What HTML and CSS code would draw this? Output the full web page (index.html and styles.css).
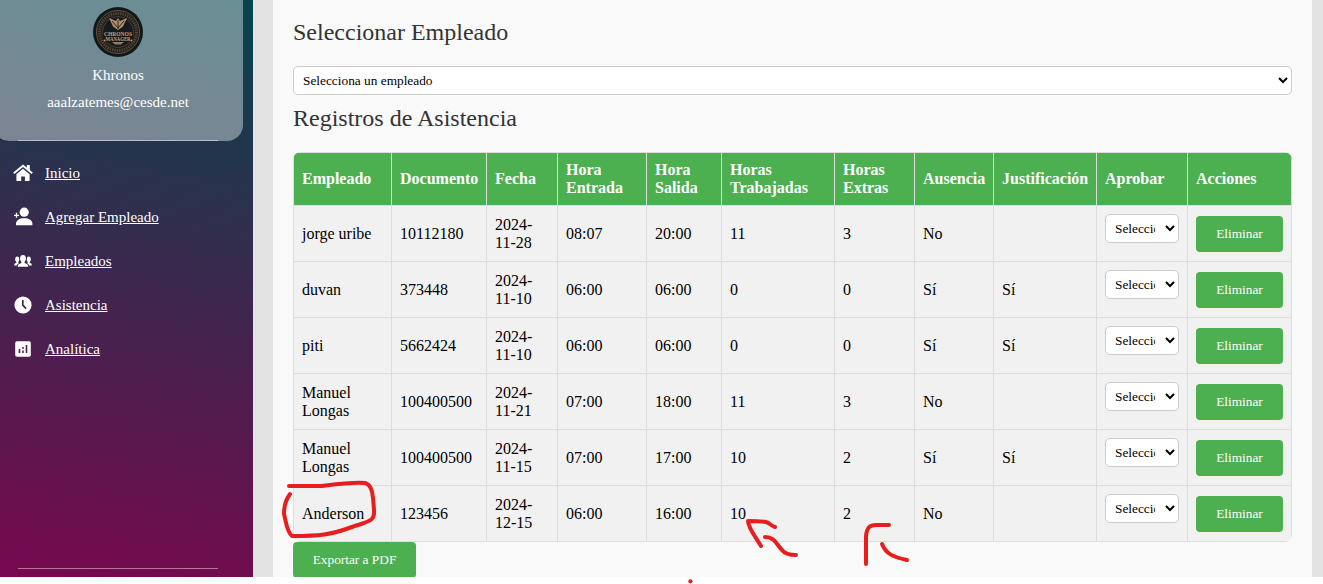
FILE: index.html
```html
<!DOCTYPE html>
<html lang="es">
<head>
<meta charset="utf-8">
<title>Registros de Asistencia</title>
<link rel="stylesheet" href="styles.css">
</head>
<body>
<div class="app">
  <aside class="sidebar">
    <div class="profile">
      <svg class="avatar" viewBox="0 0 50 50">
        <circle cx="25" cy="25" r="25" fill="#10181b"/>
        <circle cx="25" cy="25" r="21.500" fill="#211f1c" stroke="#685040" stroke-width="1"/>
        <circle cx="25" cy="25" r="18.500" fill="none" stroke="#55463a" stroke-width="3" stroke-dasharray="1.3 1.1"/>
        <circle cx="25" cy="25" r="15.500" fill="#151b1e" stroke="#58483a" stroke-width=".8"/>
        <path d="M16 11l7 3 2-3 2 3 7-3-4 8.500-5 3.500-5-3.500z" fill="#b08d6a"/>
        <path d="M19 14l6 7 6-7M25 13v9" fill="none" stroke="#32271f" stroke-width="1"/>
        <rect x="10" y="23.500" width="30" height="11" fill="#1a1a1a"/>
        <text x="25" y="28.600" class="crest" textLength="28" lengthAdjust="spacingAndGlyphs">CHRONOS</text>
        <text x="25" y="33.700" class="crest" textLength="25" lengthAdjust="spacingAndGlyphs">MANAGER</text>
        <path d="M19 35h12l-3 2.500h-6z" fill="#9b7957"/>
        <circle cx="11.500" cy="33.500" r=".9" fill="#d19a58"/><circle cx="38.500" cy="33.500" r=".9" fill="#d19a58"/>
      </svg>
      <p class="name">Khronos</p>
      <p class="mail">aaalzatemes@cesde.net</p>
      <hr class="rule">
    </div>
    <nav class="menu">
      <a href="#"><svg viewBox="0 0 20 20"><path d="M10 5.700l6.600 5.600v5.900a.9.9 0 0 1-.9.900h-3.800v-4.600H8.200v4.600H4.300a.9.9 0 0 1-.9-.900v-5.900z"/><path d="M.8 10.200L10 2.800l9.200 7.400" fill="none" stroke="#fff" stroke-width="2"/><path d="M13.800 1.900h3v6.500l-3-2.400z"/></svg><span>Inicio</span></a>
      <a href="#"><svg viewBox="0 0 20 20"><circle cx="11.200" cy="5.200" r="4.600"/><path d="M3 18.300v-1.500c0-3.600 3.400-5.600 8.200-5.600s8.200 2 8.200 5.600v1.500z"/><path d="M3.500 5.800v5M1 8.300h5" stroke="#fff" stroke-width="1.300"/></svg><span>Agregar Empleado</span></a>
      <a href="#"><svg viewBox="0 0 20 20"><ellipse cx="10" cy="7.400" rx="2.900" ry="3.400"/><path d="M4.800 15.800c0-2.500 1-3 3.600-3.900V9h3.200v2.900c2.600.9 3.600 1.400 3.600 3.900z"/><ellipse cx="4.200" cy="8.300" rx="2" ry="2.800"/><ellipse cx="15.800" cy="8.300" rx="2" ry="2.800"/><path d="M1.200 14.400c0-1.700.7-2.100 2.200-2.600V9h1.800v2.400l1 .5c-1.300.5-2 1.200-2.300 2.500zM18.800 14.400c0-1.700-.7-2.100-2.200-2.600V9h-1.800v2.400l-1 .5c1.300.5 2 1.200 2.300 2.500z"/></svg><span>Empleados</span></a>
      <a href="#"><svg viewBox="0 0 20 20"><circle cx="10" cy="10" r="8.600"/><path d="M9.800 5v5.200l3.300 3.400" fill="none" stroke="#44264f" stroke-width="1.700"/></svg><span>Asistencia</span></a>
      <a href="#"><svg viewBox="0 0 20 20"><rect x="2.200" y="2.200" width="15.600" height="15.600" rx="1.800"/><path d="M6.500 10v4M10 11.500V14M10 8v1.800M13.500 6v8" stroke="#4c204e" stroke-width="1.600"/></svg><span>Analítica</span></a>
    </nav>
    <hr class="rule foot">
  </aside>
  <main class="content">
    <h2>Seleccionar Empleado</h2>
    <select class="picker"><option>Selecciona un empleado</option></select>
    <h2>Registros de Asistencia</h2>
    <div class="frame">
      <table>
        <colgroup><col class="c1"><col class="c2"><col class="c3"><col class="c4"><col class="c5"><col class="c6"><col class="c7"><col class="c8"><col class="c9"><col class="c10"><col class="c11"></colgroup>
        <thead><tr><th>Empleado</th><th>Documento</th><th>Fecha</th><th>Hora Entrada</th><th>Hora Salida</th><th>Horas Trabajadas</th><th>Horas Extras</th><th>Ausencia</th><th>Justificación</th><th>Aprobar</th><th>Acciones</th></tr></thead>
        <tbody>
          <tr><td>jorge uribe</td><td>10112180</td><td>2024-11-28</td><td>08:07</td><td>20:00</td><td>11</td><td>3</td><td>No</td><td></td><td><select><option>Seleccionar</option></select></td><td><button>Eliminar</button></td></tr>
          <tr><td>duvan</td><td>373448</td><td>2024-11-10</td><td>06:00</td><td>06:00</td><td>0</td><td>0</td><td>Sí</td><td>Sí</td><td><select><option>Seleccionar</option></select></td><td><button>Eliminar</button></td></tr>
          <tr><td>piti</td><td>5662424</td><td>2024-11-10</td><td>06:00</td><td>06:00</td><td>0</td><td>0</td><td>Sí</td><td>Sí</td><td><select><option>Seleccionar</option></select></td><td><button>Eliminar</button></td></tr>
          <tr><td>Manuel Longas</td><td>100400500</td><td>2024-11-21</td><td>07:00</td><td>18:00</td><td>11</td><td>3</td><td>No</td><td></td><td><select><option>Seleccionar</option></select></td><td><button>Eliminar</button></td></tr>
          <tr><td>Manuel Longas</td><td>100400500</td><td>2024-11-15</td><td>07:00</td><td>17:00</td><td>10</td><td>2</td><td>Sí</td><td>Sí</td><td><select><option>Seleccionar</option></select></td><td><button>Eliminar</button></td></tr>
          <tr><td>Anderson</td><td>123456</td><td>2024-12-15</td><td>06:00</td><td>16:00</td><td>10</td><td>2</td><td>No</td><td></td><td><select><option>Seleccionar</option></select></td><td><button>Eliminar</button></td></tr>
        </tbody>
      </table>
    </div>
    <button class="export">Exportar a PDF</button>
  </main>
</div>
<svg class="marks" viewBox="0 0 1323 584">
  <path d="M289 486H322C338 484 352 482 365 483C373 485 373 497 374 510C375 521 370 521 352 527C330 535 320 536 292 536C287 532 286 522 284 514C284 505 287 498 290 494"/>
  <path d="M761 546C757 539 748 528 748 521C753 521 761 521 766 522C770 523 771 526 775 527M765 537C775 537 776 544 782 550C785 554 789 555 796 555"/>
  <path d="M866 564V536C867 527 870 525 876 525H889M882 544C886 554 893 557 907 560"/>
  <circle class="dot" cx="690.400" cy="581.300" r="2.100"/>
</svg>
</body>
</html>
```
FILE: styles.css
```css
* { box-sizing: border-box; }
body { position: relative; height: 584px; margin: 0; background: #fff; font: 16px/18px "Liberation Serif", "Times New Roman", serif; color: #000; }
.app { display: flex; height: 577px; background: #e3e3e3; }
.sidebar { width: 253px; display: flex; flex-direction: column; overflow: hidden; color: #fff; font-size: 15px; background: linear-gradient(190deg, #05454d 0%, #78084f 100%); }
.profile { width: 250px; height: 141px; margin-left: -7px; padding-top: 7px; display: flex; flex-direction: column; align-items: center; background: rgba(255, 255, 255, .4); border-radius: 0 0 16px 16px; }
.avatar { width: 50px; height: 50px; }
.crest { font: bold 5.6px "Liberation Serif", serif; fill: #c6a078; text-anchor: middle; }
.profile p { margin: 9px 0 0; line-height: 18px; }
.rule { width: 200px; height: 1px; margin: auto 0 0; border: 0; background: rgba(255, 255, 255, .45); }
.menu { display: flex; flex-direction: column; gap: 24px; padding: 22px 0 0 13px; }
.menu a { display: flex; align-items: center; gap: 12px; height: 20px; color: #fff; }
.menu svg { width: 20px; height: 20px; fill: #fff; }
.foot { margin: auto 0 8px 18px; }
.content { width: 1039px; margin-left: 20px; padding: 19px 20px 0; background: #f9f9f9; overflow: hidden; }
h2 { margin: 0 0 20px; font-size: 24px; font-weight: normal; line-height: 27px; color: #333; }
select { display: block; width: 100%; height: 29px; margin: 0 0 10px; padding: 5px; font: 13.333px "Liberation Serif", serif; color: #000; background: #fff; border: 1px solid #ccc; border-radius: 5px; }
td select { padding-right: 7px; }
.frame { width: 999px; border-radius: 8px; overflow: hidden; }
table { width: 999px; table-layout: fixed; border-collapse: collapse; }
th, td { border: 1px solid #ddd; padding: 8px; text-align: left; vertical-align: middle; }
th { height: 53px; background: #4caf50; color: #fff; font-weight: bold; }
td { height: 56px; background: #f1f1f1; }
.c1 { width: 98px; }
.c2 { width: 95px; }
.c3 { width: 71px; }
.c4 { width: 89px; }
.c5 { width: 75px; }
.c6 { width: 113px; }
.c7 { width: 80px; }
.c8 { width: 79px; }
.c9 { width: 103px; }
.c10 { width: 91px; }
.c11 { width: 104px; }
button { display: block; width: 87px; height: 36px; padding: 0; font: 13.333px "Liberation Serif", serif; color: #fff; background: #4caf50; border: 0; border-radius: 4px; }
.export { width: 123px; }
.marks { position: absolute; left: 0; top: 0; width: 1323px; height: 584px; fill: none; stroke: #e81e1e; stroke-width: 4; stroke-linecap: round; stroke-linejoin: round; pointer-events: none; }
.marks .dot { fill: #e81e1e; stroke: none; }
```
